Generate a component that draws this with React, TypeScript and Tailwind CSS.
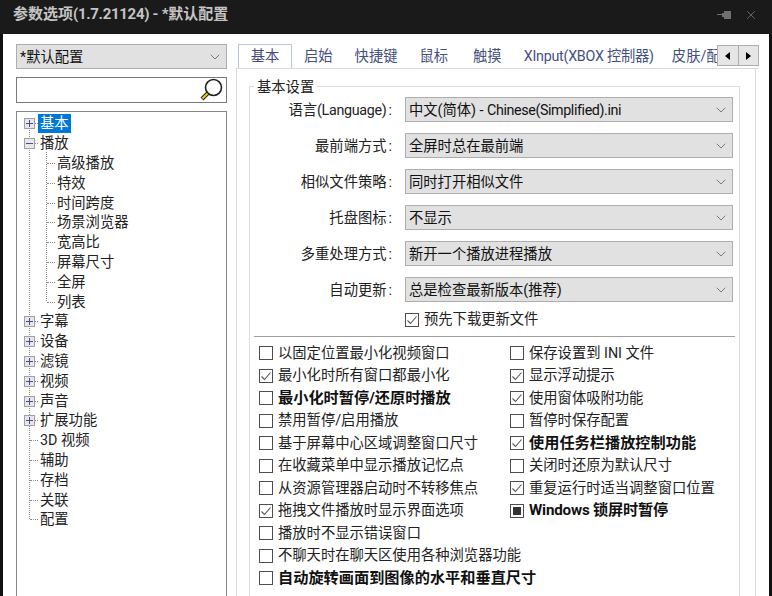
import type { ReactNode } from "react"
import { ChevronDown, X } from "lucide-react"

const fontStack = "font-['Roboto','Noto_Sans_CJK_SC',sans-serif]"

const tree: { label: string; depth: number; box?: "plus" | "minus"; selected?: boolean }[] = [
  { label: "基本", depth: 0, box: "plus", selected: true },
  { label: "播放", depth: 0, box: "minus" },
  { label: "高级播放", depth: 1 },
  { label: "特效", depth: 1 },
  { label: "时间跨度", depth: 1 },
  { label: "场景浏览器", depth: 1 },
  { label: "宽高比", depth: 1 },
  { label: "屏幕尺寸", depth: 1 },
  { label: "全屏", depth: 1 },
  { label: "列表", depth: 1 },
  { label: "字幕", depth: 0, box: "plus" },
  { label: "设备", depth: 0, box: "plus" },
  { label: "滤镜", depth: 0, box: "plus" },
  { label: "视频", depth: 0, box: "plus" },
  { label: "声音", depth: 0, box: "plus" },
  { label: "扩展功能", depth: 0, box: "plus" },
  { label: "3D 视频", depth: 0 },
  { label: "辅助", depth: 0 },
  { label: "存档", depth: 0 },
  { label: "关联", depth: 0 },
  { label: "配置", depth: 0 },
]

const tabs = [
  { label: "启始", cls: "ml-[12px]" },
  { label: "快捷键", cls: "ml-[22px]" },
  { label: "鼠标", cls: "ml-[22px]" },
  { label: "触摸", cls: "ml-[25px]" },
  { label: "XInput(XBOX 控制器)", cls: "ml-[22px] tracking-[-0.25px]" },
  { label: "皮肤/配置", cls: "ml-[18px]" },
]

const selects: { label: ReactNode; key: string; value: ReactNode }[] = [
  {
    key: "language",
    label: (
      <>
        语言<span className="tracking-[-0.3px]">(Language)</span>
      </>
    ),
    value: (
      <>
        中文(简体) - <span className="tracking-[-0.4px]">Chinese(Simplified).ini</span>
      </>
    ),
  },
  { key: "topmost", label: "最前端方式", value: "全屏时总在最前端" },
  { key: "similar", label: "相似文件策略", value: "同时打开相似文件" },
  { key: "tray", label: "托盘图标", value: "不显示" },
  { key: "process", label: "多重处理方式", value: "新开一个播放进程播放" },
  { key: "update", label: "自动更新", value: "总是检查最新版本(推荐)" },
]

type Opt = { label: string; state?: "on" | "mixed"; bold?: boolean; tight?: boolean }

const leftOpts: Opt[] = [
  { label: "以固定位置最小化视频窗口" },
  { label: "最小化时所有窗口都最小化", state: "on" },
  { label: "最小化时暂停/还原时播放", bold: true },
  { label: "禁用暂停/启用播放" },
  { label: "基于屏幕中心区域调整窗口尺寸" },
  { label: "在收藏菜单中显示播放记忆点" },
  { label: "从资源管理器启动时不转移焦点" },
  { label: "拖拽文件播放时显示界面选项", state: "on" },
  { label: "播放时不显示错误窗口" },
  { label: "不聊天时在聊天区使用各种浏览器功能" },
  { label: "自动旋转画面到图像的水平和垂直尺寸", bold: true },
]

const rightOpts: Opt[] = [
  { label: "保存设置到 INI 文件" },
  { label: "显示浮动提示", state: "on" },
  { label: "使用窗体吸附功能", state: "on" },
  { label: "暂停时保存配置" },
  { label: "使用任务栏播放控制功能", state: "on", bold: true },
  { label: "关闭时还原为默认尺寸" },
  { label: "重复运行时适当调整窗口位置", state: "on" },
  { label: "Windows 锁屏时暂停", state: "mixed", bold: true, tight: true },
]

const CheckBox = ({ state }: { state?: "on" | "mixed" }) => (
  <span className="w-[14px] h-[14px] shrink-0 border border-[#4d4d4d] bg-white flex items-center justify-center">
    {state === "on" && (
      <svg width="12" height="12" viewBox="0 0 12 12" fill="none">
        <path d="M1.5 6.5 4.5 9.5 10.5 2.5" stroke="#555555" strokeWidth="1.1" />
      </svg>
    )}
    {state === "mixed" && <span className="w-[8px] h-[8px] bg-[#333333]" />}
  </span>
)

const Option = ({ opt }: { opt: Opt }) => (
  <div className="flex items-center gap-[5px] h-[22.5px]">
    <CheckBox state={opt.state} />
    <span
      className={`whitespace-nowrap ${opt.bold ? "text-[15.2px] font-bold text-[#111111]" : "text-[14.3px] text-[#222222]"} ${
        opt.tight ? "tracking-[-0.2px]" : ""
      }`}
    >
      {opt.label}
    </span>
  </div>
)

const Combo = ({ value, className }: { value: ReactNode; className: string }) => (
  <div className={`flex items-center justify-between bg-[#e1e1e1] border border-[#adadad] text-[14.3px] text-[#111111] pr-[3px] ${className}`}>
    <span className="whitespace-nowrap pt-[2px]">{value}</span>
    <ChevronDown size={16} strokeWidth={1.1} className="text-[#555555]" />
  </div>
)

const TreeBox = ({ kind }: { kind: "plus" | "minus" }) => (
  <span className="relative w-[11px] h-[11px] shrink-0 border border-[#a0a0a0] bg-[#e6e6ec] flex items-center justify-center">
    <span className="absolute w-[7px] h-[1px] bg-[#4a4f8a]" />
    {kind === "plus" && <span className="absolute w-[1px] h-[7px] bg-[#4a4f8a]" />}
  </span>
)

const TreeRow = ({ item }: { item: (typeof tree)[number] }) => (
  <div className="relative flex items-center h-[19.8px] text-[14.3px] text-[#222222]">
    {item.box ? (
      <>
        <span className="ml-[7px] flex">
          <TreeBox kind={item.box} />
        </span>
        <span className="w-[3px] border-t border-dotted border-[#888888]" />
      </>
    ) : (
      <span className={`${item.depth === 0 ? "ml-[13px]" : "ml-[30px]"} w-[8px] border-t border-dotted border-[#888888]`} />
    )}
    <span className={`whitespace-nowrap px-[2px] leading-[19px] ${item.selected ? "bg-[#0078d7] text-white" : ""}`}>{item.label}</span>
  </div>
)

export default function App() {
  return (
    <div className={`w-[772px] h-[596px] overflow-hidden bg-[#111111] flex flex-col ${fontStack}`}>
      {/* title bar */}
      <div className="h-[34px] shrink-0 bg-[#1a1a1a] flex items-center justify-between pl-[13px] pr-[14px] pb-[5px]">
        <span className="text-[15px] font-bold text-[#c4c4c4] whitespace-nowrap">
          参数选项<span className="tracking-[-0.3px]">(1.7.21124) - *</span>默认配置
        </span>
        <div className="flex items-center gap-[12px] text-[#6f6f6f]">
          <svg width="15" height="12" viewBox="0 0 15 12" fill="currentColor">
            <path d="M0 5h5V6H0zM5 4h2V2h7v8H7V8H5z" />
          </svg>
          <X size={14} strokeWidth={1.5} />
        </div>
      </div>

      {/* dialog body */}
      <div className="flex-1 min-h-0 mx-[3px] bg-white flex">
        {/* left column */}
        <div className="w-[224px] shrink-0 pl-[13px] pt-[10px] flex flex-col">
          <Combo value="*默认配置" className="w-[211px] h-[25px] pl-[3px]" />
          <div className="w-[211px] h-[26px] mt-[8px] border border-[#7a7a7a] flex items-center justify-end pr-[3px]">
            <svg width="24" height="24" viewBox="0 0 24 24" fill="none">
              <circle cx="14.5" cy="9.5" r="8" fill="#ffffff" stroke="#222222" strokeWidth="1.6" />
              <path d="M9 15 3 21" stroke="#222222" strokeWidth="4" />
              <path d="M8.5 15.5 3.5 20.5" stroke="#eec21e" strokeWidth="2.2" />
            </svg>
          </div>
          <div className="relative w-[211px] flex-1 mt-[8px] border border-[#828790] border-b-0 pt-[2px]">
            <span className="absolute left-[12px] top-[11px] h-[396px] border-l border-dotted border-[#888888]" />
            <span className="absolute left-[29px] top-[40px] h-[149px] border-l border-dotted border-[#888888]" />
            {tree.map((item) => (
              <TreeRow key={item.label} item={item} />
            ))}
          </div>
        </div>

        {/* right column */}
        <div className="flex-1 min-w-0 pt-[11px] flex flex-col">
          {/* tabs */}
          <div className="relative h-[24px] shrink-0 ml-[9px] mr-[10px] pl-[2px] flex items-end text-[14.3px] text-[#46507e] border-b border-[#d9d9d9]">
            <div className="h-[24px] w-[54px] shrink-0 flex items-center justify-center border border-[#b8c6d9] border-b-0 bg-white text-[#444a80]">基本</div>
            <div className="flex-1 min-w-0 h-[23px] overflow-hidden flex items-center whitespace-nowrap">
              {tabs.map((t) => (
                <span key={t.label} className={`${t.cls} shrink-0`}>
                  {t.label}
                </span>
              ))}
            </div>
            <div className="absolute right-0 top-0 h-[21px] w-[42px] flex bg-[#e6e6e6] border border-[#adadad]">
              <span className="flex-1 flex items-center justify-center border-r border-[#adadad] text-black">
                <svg width="5" height="8" viewBox="0 0 5 8" fill="currentColor"><path d="M5 0v8L0 4z" /></svg>
              </span>
              <span className="flex-1 flex items-center justify-center text-black">
                <svg width="5" height="8" viewBox="0 0 5 8" fill="currentColor"><path d="M0 0v8l5-4z" /></svg>
              </span>
            </div>
          </div>

          {/* page */}
          <div className="flex-1 min-h-0 ml-[9px] mr-[13px] border-x border-[#d9d9d9] pt-[17px] pl-[12px] pr-[15px]">
            <div className="relative border border-[#dcdcdc] h-[600px] px-[4px] pt-[10px]">
              <span className="absolute left-[4px] top-[-9px] bg-white px-[3px] text-[14.3px] leading-[18px] text-[#222222]">基本设置</span>
              <div className="flex flex-col gap-[11px]">
                {selects.map((s) => (
                  <div key={s.key} className="flex items-center h-[25px]">
                    <span className="w-[139px] pt-[2px] text-right text-[14.3px] text-[#222222] whitespace-nowrap">
                      {s.label}
                      <span className="ml-[2px] mr-[1px]">:</span>
                    </span>
                    <Combo value={s.value} className="ml-[12px] w-[328px] h-[25px] pl-[3px]" />
                  </div>
                ))}
              </div>
              <div className="ml-[151px] mt-[7px] h-[22px] flex items-center">
                <Option opt={{ label: "预先下载更新文件", state: "on" }} />
              </div>
              <div className="border-t border-[#a0a0a0] mt-[5px]" />
              <div className="flex pl-[5px] pt-[5px]">
                <div className="w-[251px] shrink-0">
                  {leftOpts.map((o) => (
                    <Option key={o.label} opt={o} />
                  ))}
                </div>
                <div>
                  {rightOpts.map((o) => (
                    <Option key={o.label} opt={o} />
                  ))}
                </div>
              </div>
            </div>
          </div>
        </div>
      </div>
    </div>
  )
}
